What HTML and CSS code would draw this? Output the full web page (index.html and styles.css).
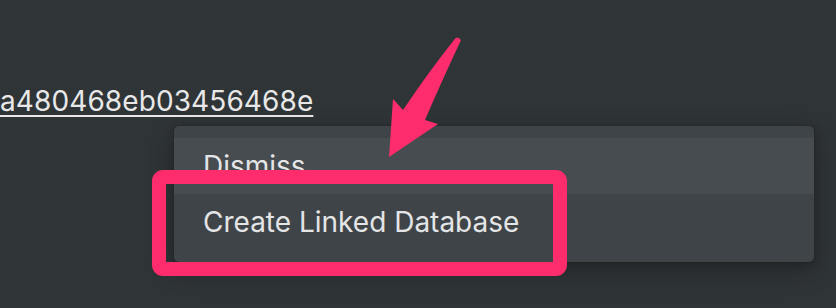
FILE: index.html
```html
<!DOCTYPE html>
<html>
<head>
<meta charset="utf-8">
<link rel="stylesheet" href="styles.css">
</head>
<body>
<div class="page">
  <a class="link" href="#">a480468eb03456468e</a>
</div>
<div class="menu">
  <div class="item hover">Dismiss</div>
  <div class="item">Create Linked Database</div>
</div>
<svg class="annot" width="836" height="308" viewBox="0 0 836 308">
  <rect x="159" y="177" width="401" height="92" rx="4" fill="none" stroke="#fd2d6d" stroke-width="14"/>
  <path d="M454 40 Q457 35 461 40 Q440 85 425 120 L438 124 L389 157 L393 99 L403 110 Q430 70 454 40 Z" fill="#fd2d6d"/>
</svg>
</body>
</html>
```
FILE: styles.css
```css
html, body {
  margin: 0;
  padding: 0;
  background: #2f3437;
  width: 836px;
  height: 308px;
  overflow: hidden;
  font-family: Inter, "Noto Sans", sans-serif;
}
.page {
  padding-top: 83px;
}
.link {
  display: inline-block;
  color: #e8e8e8;
  font-size: 28px;
  line-height: 36px;
  text-decoration: underline;
  text-decoration-thickness: 2px;
  text-underline-offset: 4px;
  letter-spacing: 0.1px;
}
.menu {
  position: absolute;
  left: 174px;
  top: 126px;
  width: 640px;
  padding: 12px 0;
  background: #3f4448;
  border-radius: 5px;
  box-shadow: 0 0 0 1px rgba(15,15,15,0.1), 0 3px 8px rgba(15,15,15,0.25), 0 9px 24px rgba(15,15,15,0.3);
}
.item {
  height: 56px;
  line-height: 56px;
  padding-left: 29px;
  color: #e4e5e6;
  font-size: 28px;
}
.item.hover {
  background: #474c50;
}
.annot {
  position: absolute;
  left: 0;
  top: 0;
}
```
